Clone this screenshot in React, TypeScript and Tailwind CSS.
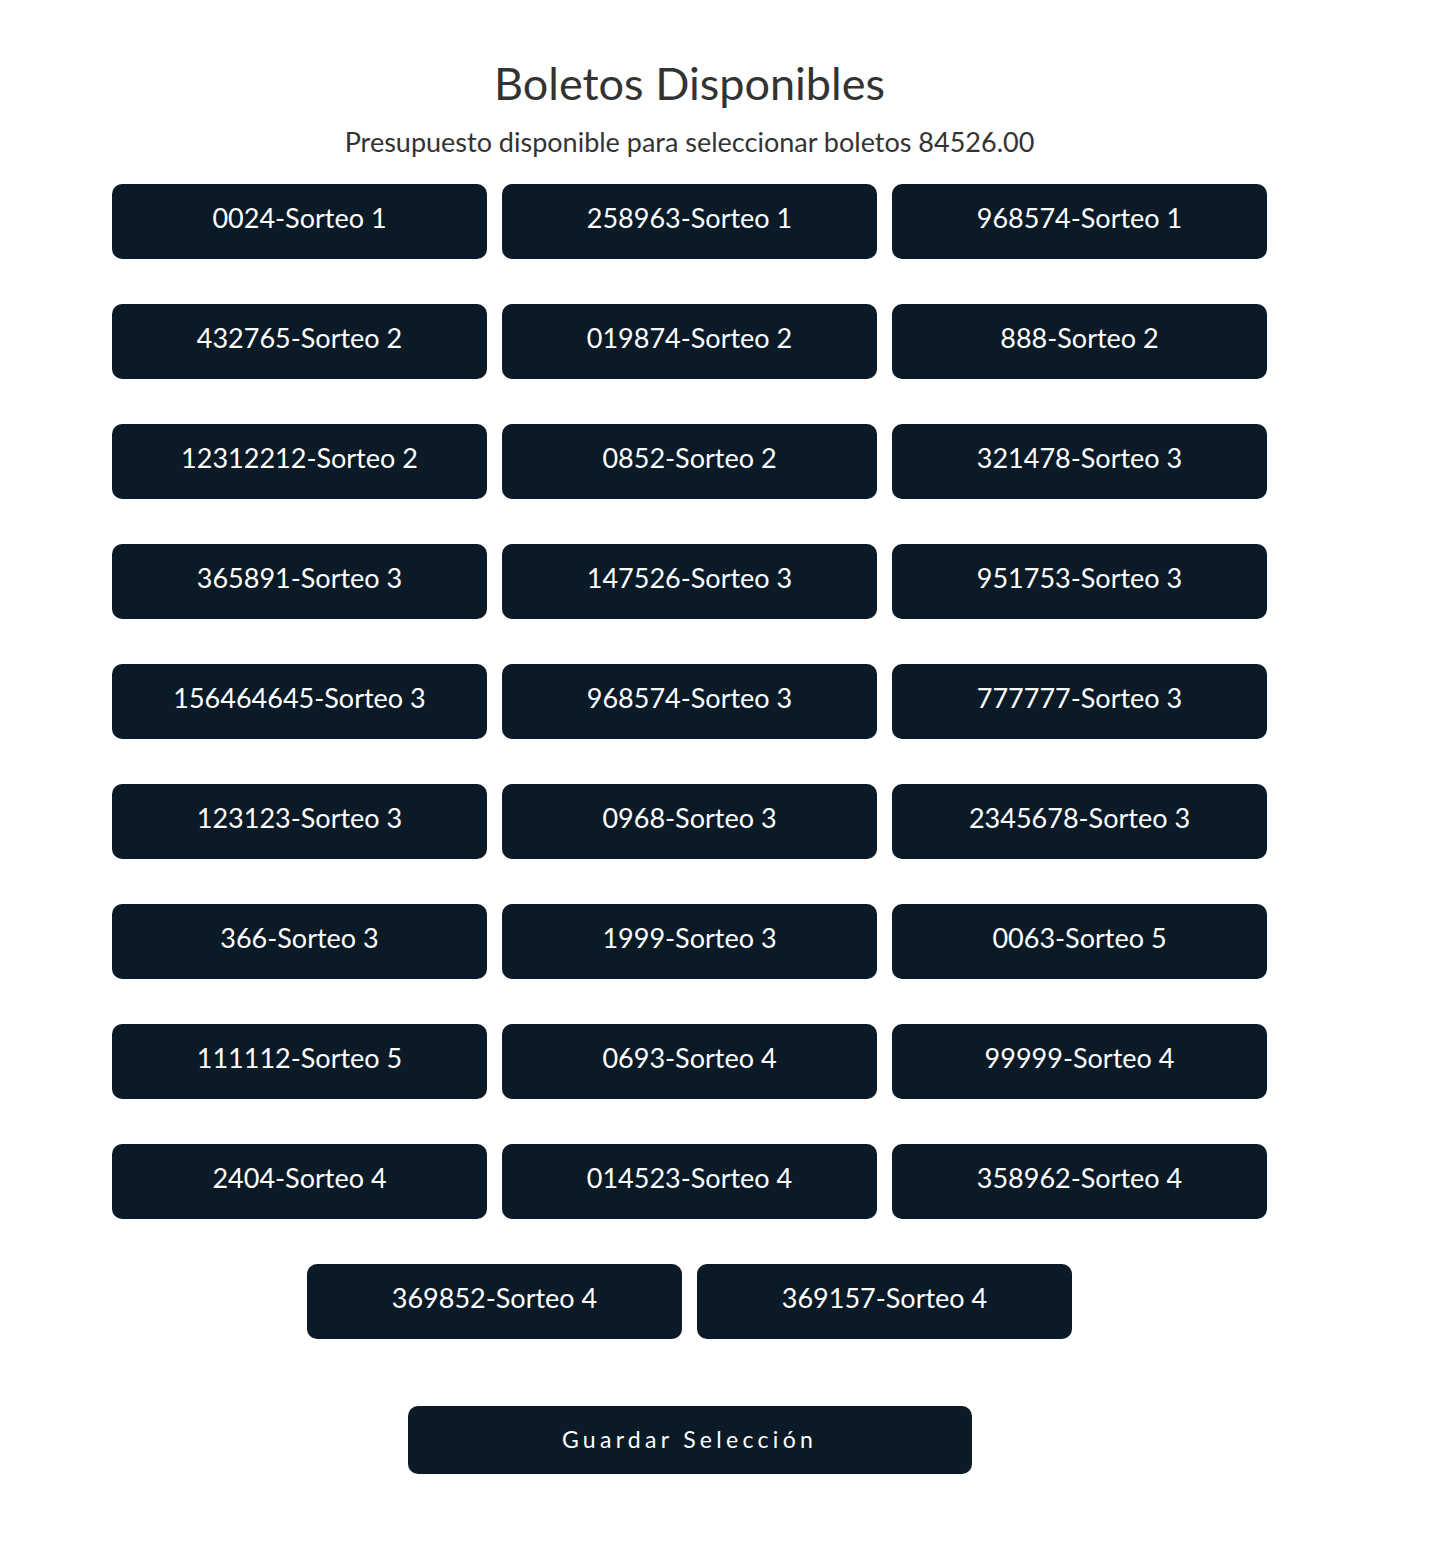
const tickets = [
  "0024-Sorteo 1",
  "258963-Sorteo 1",
  "968574-Sorteo 1",
  "432765-Sorteo 2",
  "019874-Sorteo 2",
  "888-Sorteo 2",
  "12312212-Sorteo 2",
  "0852-Sorteo 2",
  "321478-Sorteo 3",
  "365891-Sorteo 3",
  "147526-Sorteo 3",
  "951753-Sorteo 3",
  "156464645-Sorteo 3",
  "968574-Sorteo 3",
  "777777-Sorteo 3",
  "123123-Sorteo 3",
  "0968-Sorteo 3",
  "2345678-Sorteo 3",
  "366-Sorteo 3",
  "1999-Sorteo 3",
  "0063-Sorteo 5",
  "111112-Sorteo 5",
  "0693-Sorteo 4",
  "99999-Sorteo 4",
  "2404-Sorteo 4",
  "014523-Sorteo 4",
  "358962-Sorteo 4",
  "369852-Sorteo 4",
  "369157-Sorteo 4",
];

export default function App() {
  return (
    <div className="min-h-screen bg-white font-['Lato','Noto_Sans',sans-serif]">
      <div className="w-[1379px] flex flex-col items-center pt-[56px] pb-16">
        {/* Header */}
        <h1 className="text-[45px] leading-[54px] text-[#333333]">
          Boletos Disponibles
        </h1>
        <p className="mt-[15px] text-[27px] leading-[34px] text-[#333333]">
          Presupuesto disponible para seleccionar boletos 84526.00
        </p>

        {/* Tickets */}
        <div className="mt-[25px] w-[1170px] flex flex-wrap justify-center gap-y-[45px]">
          {tickets.map((t, i) => (
            <div key={i} className="px-[7.5px]">
              <button className="w-[375px] h-[75px] rounded-[10px] bg-[#0b1a27] text-white text-[27px] pb-[6px]">
                {t}
              </button>
            </div>
          ))}
        </div>

        <button className="mt-[67px] w-[564px] h-[68px] rounded-[10px] bg-[#0b1a27] text-white text-[23px] tracking-[4.3px] pb-[2px]">
          Guardar Selección
        </button>
      </div>
    </div>
  );
}
